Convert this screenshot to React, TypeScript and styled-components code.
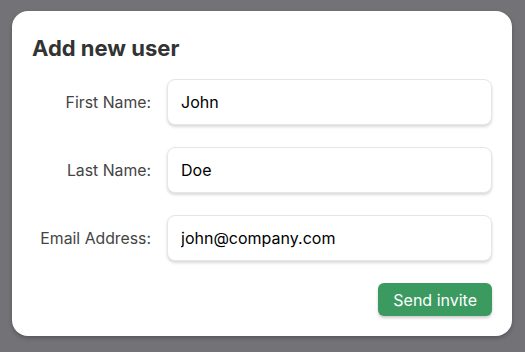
import React from "react";
import styled, { createGlobalStyle } from "styled-components";

const Global = createGlobalStyle`
  html, body { margin: 0; padding: 0; background: #737277; }
  body { font-family: Inter, "Noto Sans", sans-serif; }
  * { box-sizing: border-box; }
`;

const Page = styled.div`
  width: 525px;
  height: 352px;
  padding: 11px 13px 16px 12px;
  background: #737277;
`;

const Card = styled.div`
  width: 500px;
  height: 325px;
  background: #ffffff;
  border-radius: 16px;
  box-shadow: 0 2px 4px rgba(0, 0, 0, 0.25);
  padding: 23px 20px 20px 20px;
  display: flex;
  flex-direction: column;
`;

const Title = styled.h1`
  margin: 0 0 17px 0;
  font-size: 22px;
  line-height: 28px;
  font-weight: 700;
  color: #333333;
`;

const Form = styled.div`
  display: grid;
  grid-template-columns: 119px 1fr;
  column-gap: 16px;
  row-gap: 22px;
  align-items: center;
`;

const Label = styled.label`
  text-align: right;
  font-size: 15.8px;
  color: #444444;
`;

const Input = styled.input`
  height: 46px;
  width: 100%;
  border: 1px solid #e6e6e6;
  border-radius: 8px;
  box-shadow: 0 2px 3px rgba(0, 0, 0, 0.15);
  padding: 0 13px;
  font-family: Inter, "Noto Sans", sans-serif;
  font-size: 16px;
  color: #000000;
  outline: none;
  background: #ffffff;
`;

const Actions = styled.div`
  display: flex;
  justify-content: flex-end;
  margin-top: 22px;
`;

const Button = styled.button`
  height: 33px;
  padding: 0 15px;
  border: none;
  border-radius: 6px;
  background: #3a9a5f;
  color: #ffffff;
  font-family: Inter, "Noto Sans", sans-serif;
  font-size: 16px;
  box-shadow: 0 2px 3px rgba(0, 0, 0, 0.2);
  cursor: pointer;
`;

const fields = [
  { id: "first", label: "First Name:", value: "John" },
  { id: "last", label: "Last Name:", value: "Doe" },
  { id: "email", label: "Email Address:", value: "john@company.com" },
];

export default function App() {
  return (
    <>
      <Global />
      <Page>
        <Card>
          <Title>Add new user</Title>
          <Form>
            {fields.map((f) => (
              <React.Fragment key={f.id}>
                <Label htmlFor={f.id}>{f.label}</Label>
                <Input id={f.id} defaultValue={f.value} />
              </React.Fragment>
            ))}
          </Form>
          <Actions>
            <Button>Send invite</Button>
          </Actions>
        </Card>
      </Page>
    </>
  );
}
